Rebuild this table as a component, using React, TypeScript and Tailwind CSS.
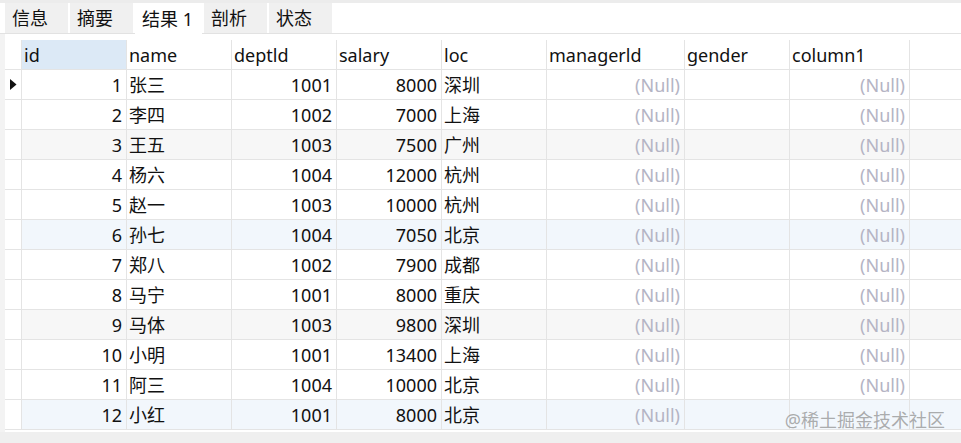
import React from "react";

type Row = {
  id: number;
  name: string;
  deptId: number;
  salary: number;
  loc: string;
  bg: string;
};

const rows: Row[] = [
  { id: 1, name: "张三", deptId: 1001, salary: 8000, loc: "深圳", bg: "bg-white" },
  { id: 2, name: "李四", deptId: 1002, salary: 7000, loc: "上海", bg: "bg-white" },
  { id: 3, name: "王五", deptId: 1003, salary: 7500, loc: "广州", bg: "bg-[#f7f7f7]" },
  { id: 4, name: "杨六", deptId: 1004, salary: 12000, loc: "杭州", bg: "bg-white" },
  { id: 5, name: "赵一", deptId: 1003, salary: 10000, loc: "杭州", bg: "bg-white" },
  { id: 6, name: "孙七", deptId: 1004, salary: 7050, loc: "北京", bg: "bg-[#f2f7fc]" },
  { id: 7, name: "郑八", deptId: 1002, salary: 7900, loc: "成都", bg: "bg-white" },
  { id: 8, name: "马宁", deptId: 1001, salary: 8000, loc: "重庆", bg: "bg-white" },
  { id: 9, name: "马体", deptId: 1003, salary: 9800, loc: "深圳", bg: "bg-[#f7f7f7]" },
  { id: 10, name: "小明", deptId: 1001, salary: 13400, loc: "上海", bg: "bg-white" },
  { id: 11, name: "阿三", deptId: 1004, salary: 10000, loc: "北京", bg: "bg-white" },
  { id: 12, name: "小红", deptId: 1001, salary: 8000, loc: "北京", bg: "bg-[#f2f7fc]" },
];

const tabs = ["信息", "摘要", "结果 1", "剖析", "状态"];

// 列宽含右边框
const cols = [
  { key: "id", w: "w-[105px]", right: true },
  { key: "name", w: "w-[105px]", right: false },
  { key: "deptId", w: "w-[105px]", right: true },
  { key: "salary", w: "w-[105px]", right: true },
  { key: "loc", w: "w-[105px]", right: false },
  { key: "managerId", w: "w-[138px]", right: true },
  { key: "gender", w: "w-[105px]", right: false },
  { key: "column1", w: "w-[120px]", right: true },
];

const headers = ["id", "name", "deptld", "salary", "loc", "managerld", "gender", "column1"];

function Cell({ w, right, muted, children }: { w: string; right: boolean; muted?: boolean; children?: React.ReactNode }) {
  return (
    <div
      className={`${w} h-full shrink-0 border-r border-[#e4e4e4] flex items-center ${
        right ? "justify-end pr-[4px]" : "justify-start pl-[2px]"
      } ${muted ? "text-[#b4b4c4]" : "text-[#111]"}`}
    >
      {children}
    </div>
  );
}

export default function App() {
  return (
    <div
      className="w-[961px] h-[443px] bg-white overflow-hidden relative text-[18px] leading-none"
      style={{ fontFamily: '"Noto Sans", "Noto Sans CJK SC", sans-serif' }}
    >
      {/* 顶部标签 */}
      <div className="h-[3px] bg-[#ececec]" />
      <div className="flex items-end gap-[2px] pl-[5px] h-[31px] border-b border-[#e2e2e2] bg-white">
        {tabs.map((t, i) =>
          i === 2 ? (
            <div key={t} className="w-[67px] h-[31px] bg-white flex items-center pl-[7px] text-[#111] -mb-px">
              {t}
            </div>
          ) : (
            <div key={t} className="w-[63px] h-[30px] bg-[#f0f0f0] flex items-center pl-[7px] text-[#111]">
              {t}
            </div>
          )
        )}
      </div>

      <div className="flex">
        <div className="w-[5px] h-[398px] bg-[#f3f3f3]" />
        <div className="flex-1">
          <div className="h-[6px]" />
          {/* 表头 */}
          <div className="flex h-[30px] border-b border-[#e4e4e4]">
            <div className="w-[17px] shrink-0 border-r border-[#e4e4e4] bg-white" />
            {cols.map((c, i) => (
              <div
                key={c.key}
                className={`${c.w} shrink-0 border-r border-[#e4e4e4] flex items-center pl-[2px] text-[#111] ${
                  i === 0 ? "bg-[#dce9f6]" : "bg-white"
                }`}
              >
                {headers[i]}
              </div>
            ))}
          </div>
          {/* 数据行 */}
          {rows.map((r) => (
            <div key={r.id} className={`flex h-[30px] border-b border-[#e4e4e4] ${r.bg}`}>
              <div className="w-[17px] shrink-0 border-r border-[#e4e4e4] bg-white flex items-center pl-[5px]">
                {r.id === 1 && (
                  <svg width="7" height="11" viewBox="0 0 7 11">
                    <path d="M0 0 L6.5 5.5 L0 11 Z" fill="#111" />
                  </svg>
                )}
              </div>
              <Cell w={cols[0].w} right>{r.id}</Cell>
              <Cell w={cols[1].w} right={false}>{r.name}</Cell>
              <Cell w={cols[2].w} right>{r.deptId}</Cell>
              <Cell w={cols[3].w} right>{r.salary}</Cell>
              <Cell w={cols[4].w} right={false}>{r.loc}</Cell>
              <Cell w={cols[5].w} right muted>(Null)</Cell>
              <Cell w={cols[6].w} right={false} />
              <Cell w={cols[7].w} right muted>{r.id === 12 ? "" : "(Null)"}</Cell>
            </div>
          ))}
        </div>
      </div>
      <div className="absolute left-0 right-0 bottom-0 h-[11px] bg-[#efefef]" />

      {/* 水印 */}
      <div className="absolute right-[16px] bottom-[14px] text-[18px] text-[#8a8a8a]/70">
        @稀土掘金技术社区
      </div>
    </div>
  );
}
